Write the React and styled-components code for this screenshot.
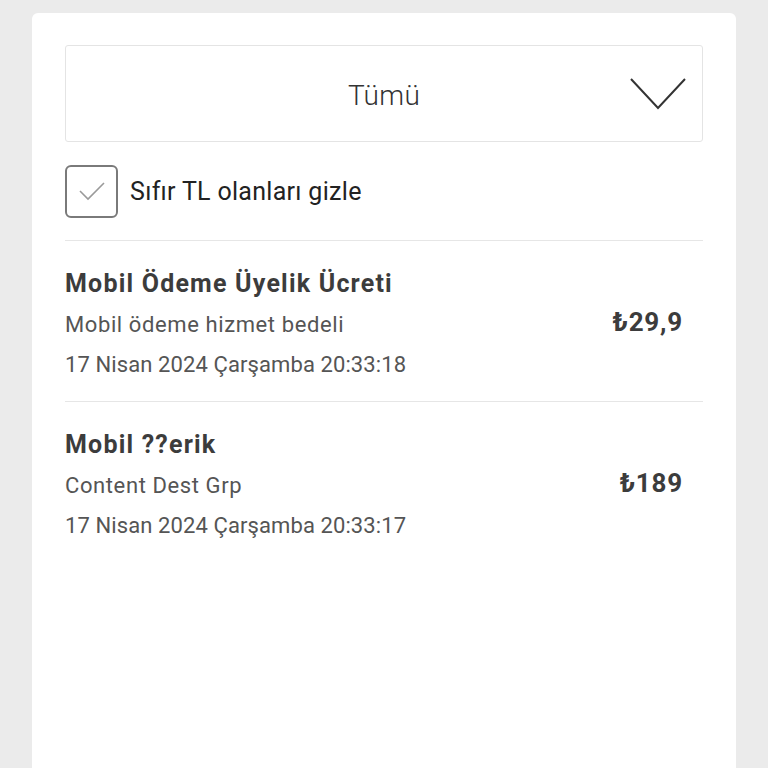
import React from "react";
import styled, { createGlobalStyle } from "styled-components";

const GlobalStyle = createGlobalStyle`
  html, body {
    margin: 0;
    padding: 0;
    background: #ebebeb;
    font-family: Roboto, "Open Sans", sans-serif;
  }
`;

const Page = styled.div`
  min-height: 768px;
  padding: 13px 32px 0 32px;
  box-sizing: border-box;
  display: flex;
`;

const Card = styled.div`
  flex: 1;
  min-height: 755px;
  background: #fff;
  border-radius: 6px 6px 0 0;
  padding: 32px 33px 0 33px;
  box-sizing: border-box;
`;

const Select = styled.div`
  height: 97px;
  border: 1px solid #e4e4e4;
  border-radius: 3px;
  box-sizing: border-box;
  display: grid;
  grid-template-columns: 1fr auto 1fr;
  align-items: center;
`;

const SelectText = styled.span`
  grid-column: 2;
  font-size: 28px;
  font-weight: 300;
  color: #333;
  padding-top: 3px;
  letter-spacing: 0.3px;
`;

const Chevron = styled.svg`
  grid-column: 3;
  justify-self: end;
  margin-right: 16px;
`;

const CheckRow = styled.label`
  display: flex;
  align-items: center;
  gap: 12px;
  height: 99px;
  border-bottom: 1px solid #e6e6e6;
  box-sizing: border-box;
`;

const Box = styled.span`
  width: 53px;
  height: 53px;
  border: 2px solid #7a7a7a;
  border-radius: 6px;
  box-sizing: border-box;
  display: flex;
  align-items: center;
  justify-content: center;
`;

const CheckText = styled.span`
  font-size: 25px;
  color: #222;
  letter-spacing: 0.3px;
`;

const Item = styled.div`
  display: flex;
  align-items: center;
  justify-content: space-between;
  height: 161px;
  padding: 5px 20px 0 0;
  border-bottom: ${(p) => (p.$last ? "none" : "1px solid #e6e6e6")};
  box-sizing: border-box;
`;

const Info = styled.div`
  display: flex;
  flex-direction: column;
`;

const Title = styled.div`
  font-size: 25px;
  font-weight: 700;
  color: #3c3c3c;
  line-height: 42px;
  letter-spacing: 1.2px;
`;

const Sub = styled.div`
  font-size: 22px;
  color: #555;
  line-height: 40px;
  letter-spacing: ${(p) => (p.$date ? "0.1px" : "0.6px")};
`;

const Price = styled.div`
  font-size: 26px;
  font-weight: 700;
  color: #3c3c3c;
  letter-spacing: 0.8px;
  margin-top: -4px;
`;

const items = [
  {
    title: "Mobil Ödeme Üyelik Ücreti",
    desc: "Mobil ödeme hizmet bedeli",
    date: "17 Nisan 2024 Çarşamba 20:33:18",
    price: "₺29,9",
  },
  {
    title: "Mobil ??erik",
    desc: "Content Dest Grp",
    date: "17 Nisan 2024 Çarşamba 20:33:17",
    price: "₺189",
  },
];

export default function App() {
  return (
    <Page>
      <GlobalStyle />
      <Card>
        <Select>
          <SelectText>Tümü</SelectText>
          <Chevron width="56" height="34" viewBox="0 0 56 34">
            <path d="M1 2 L28 31 L55 2" fill="none" stroke="#333" strokeWidth="2" />
          </Chevron>
        </Select>
        <CheckRow>
          <Box>
            <svg width="30" height="22" viewBox="0 0 30 22">
              <path d="M3 11 L11 19 L27 3" fill="none" stroke="#9a9a9a" strokeWidth="1.6" />
            </svg>
          </Box>
          <CheckText>Sıfır TL olanları gizle</CheckText>
        </CheckRow>
        {items.map((it, i) => (
          <Item key={i} $last={i === items.length - 1}>
            <Info>
              <Title>{it.title}</Title>
              <Sub>{it.desc}</Sub>
              <Sub $date>{it.date}</Sub>
            </Info>
            <Price>{it.price}</Price>
          </Item>
        ))}
      </Card>
    </Page>
  );
}
